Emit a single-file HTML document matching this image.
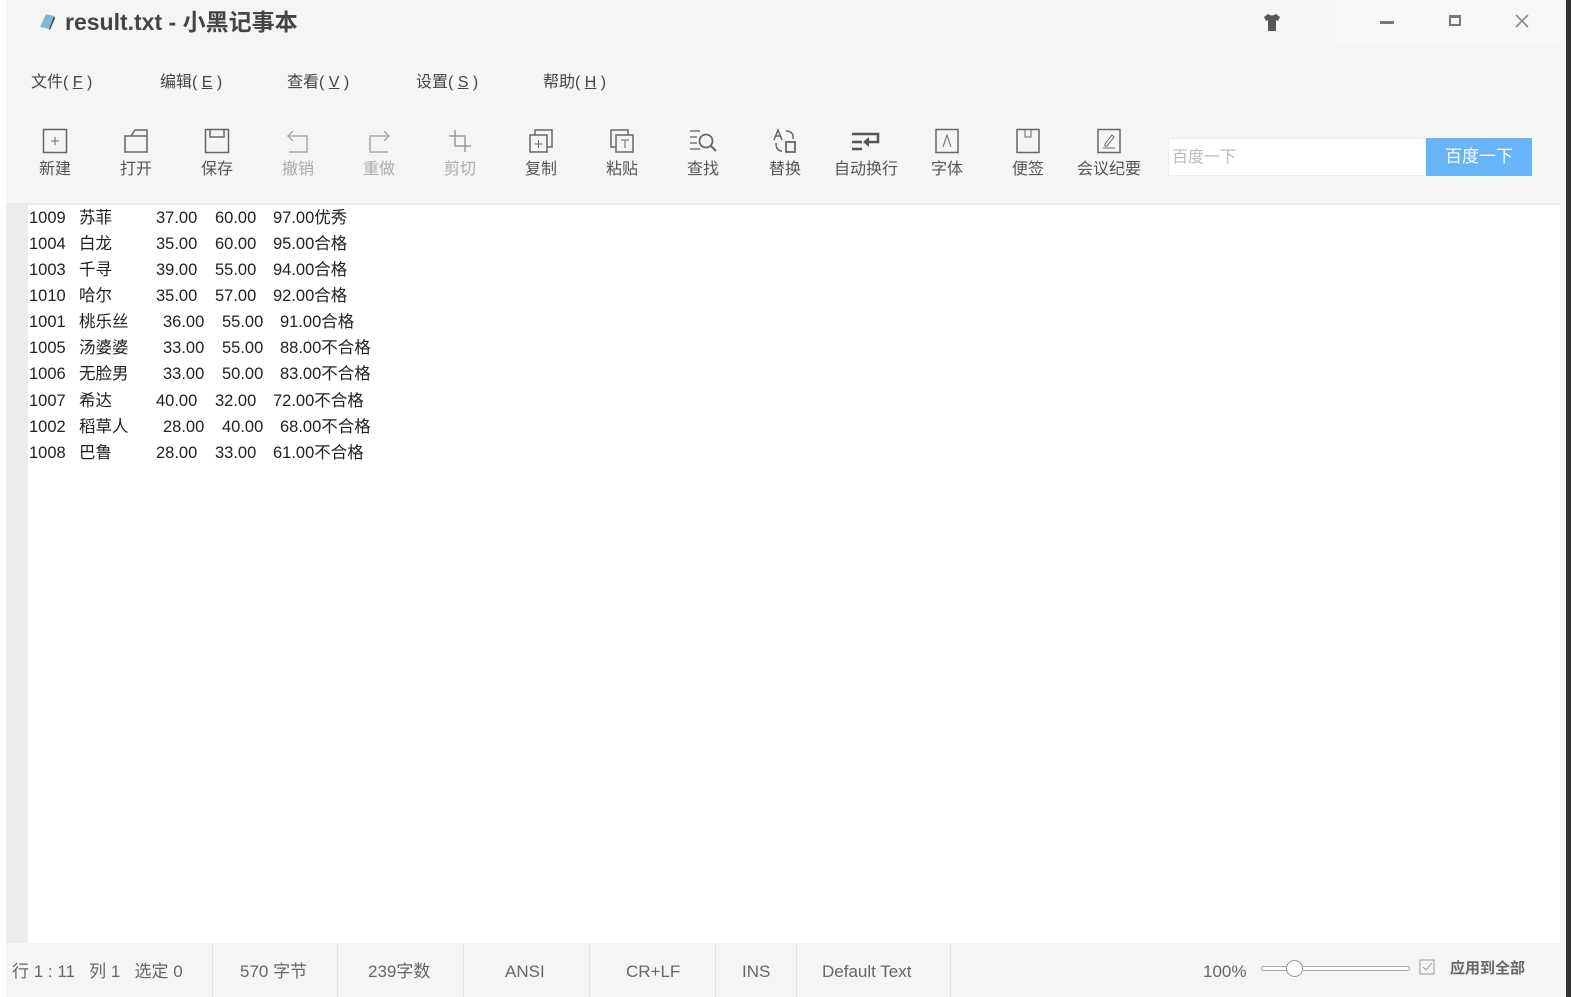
<!DOCTYPE html>
<html><head><meta charset="utf-8"><style>
*{margin:0;padding:0;box-sizing:border-box}
body{width:1571px;height:997px;overflow:hidden;background:#fff;font-family:"Liberation Sans","Noto Sans CJK SC",sans-serif;position:relative}
.win{position:absolute;left:6px;top:0;width:1560px;height:997px;background:#f5f5f5}
.abs{position:absolute;white-space:nowrap}
.menu{font-size:16px;color:#444;top:72px;line-height:22px}
.tb{position:absolute;top:128px;width:70px;text-align:center}
.tb svg{display:block;margin:0 auto}
.tb span{display:block;font-size:16px;color:#555;margin-top:5px;line-height:22px}
.tb.dis span{color:#aaa}
.ed{position:absolute;left:28px;top:205px;width:1532px;height:738px;background:#fff}
.gut{position:absolute;left:6px;top:205px;width:22px;height:738px;background:#ececec}
.ln{position:absolute;font-size:16.5px;color:#222;white-space:nowrap;line-height:22px;height:22px}
.st{position:absolute;top:961px;font-size:17px;color:#666;white-space:nowrap;line-height:22px;height:22px}
.sep{position:absolute;top:944px;width:1px;height:53px;background:#e2e2e2}
</style></head><body>
<div style="position:absolute;left:1566px;top:0;width:5px;height:997px;background:#333"></div>
<div class="win">
<div class="abs" style="left:1324px;top:0;width:236px;height:45px;background:#f7f7f7"></div>
<svg class="abs" style="left:30px;top:11px" width="22" height="20"><path d="M4 16 L10 3 L18 5 L13 18 Z" fill="#7fb8d8"/><path d="M13 18 L18 5 L19 7 L14 19Z" fill="#444"/></svg>
<div class="abs" style="left:59px;top:8px;font-size:23px;line-height:28px;font-weight:bold;color:#444">result.txt - 小黑记事本</div>
<svg class="abs" style="left:1256px;top:12px" width="20" height="20"><path d="M6 2 L2 5 L4 9 L6 8 L6 19 L14 19 L14 8 L16 9 L18 5 L14 2 Q10 5 6 2Z" fill="#555"/></svg>
<div class="abs" style="left:1374px;top:21px;width:14px;height:3px;background:#777"></div>
<div class="abs" style="left:1443px;top:15px;width:12px;height:11px;border:2px solid #777;border-top-width:3px"></div>
<svg class="abs" style="left:1508px;top:13px" width="16" height="16"><path d="M2 2L14 14M14 2L2 14" stroke="#888" stroke-width="1.6"/></svg>

<div class="abs menu" style="left:25px">文件( <u>F</u> )</div>
<div class="abs menu" style="left:154px">编辑( <u>E</u> )</div>
<div class="abs menu" style="left:281px">查看( <u>V</u> )</div>
<div class="abs menu" style="left:410px">设置( <u>S</u> )</div>
<div class="abs menu" style="left:537px">帮助( <u>H</u> )</div>

<div class="tb" style="left:14px"><svg width="26" height="26"><rect x="1.5" y="1.5" width="23" height="23" fill="none" stroke="#666" stroke-width="1.5"/><path d="M13 9v8M9 13h8" stroke="#666"/></svg><span>新建</span></div>
<div class="tb" style="left:95px"><svg width="26" height="26"><path d="M2 24V8h6l4-6h12v22z M2 8h22" fill="none" stroke="#666" stroke-width="1.5"/></svg><span>打开</span></div>
<div class="tb" style="left:176px"><svg width="26" height="26"><rect x="1.5" y="1.5" width="23" height="23" fill="none" stroke="#666" stroke-width="1.5"/><path d="M6 2v7h14V2" fill="none" stroke="#666" stroke-width="1.5"/></svg><span>保存</span></div>
<div class="tb dis" style="left:257px"><svg width="26" height="26"><path d="M8 3L3 8l5 5M3 8h19v16H4" fill="none" stroke="#aaa" stroke-width="1.5"/></svg><span>撤销</span></div>
<div class="tb dis" style="left:338px"><svg width="26" height="26"><path d="M18 3l5 5-5 5M23 8H4v16h18" fill="none" stroke="#aaa" stroke-width="1.5"/></svg><span>重做</span></div>
<div class="tb dis" style="left:419px"><svg width="26" height="26"><path d="M8 2v16h16M2 8h16v16" fill="none" stroke="#999" stroke-width="1.5"/></svg><span>剪切</span></div>
<div class="tb" style="left:500px"><svg width="26" height="26"><rect x="7" y="2" width="17" height="17" fill="none" stroke="#666" stroke-width="1.5"/><rect x="2" y="7" width="17" height="17" fill="#f5f5f5" stroke="#666" stroke-width="1.5"/><path d="M10.5 12v8M6.5 16h8" stroke="#666"/></svg><span>复制</span></div>
<div class="tb" style="left:581px"><svg width="26" height="26"><rect x="2" y="2" width="17" height="17" fill="none" stroke="#666" stroke-width="1.5"/><rect x="7" y="7" width="17" height="17" fill="#f5f5f5" stroke="#666" stroke-width="1.5"/><path d="M12 12h8M16 12v8" stroke="#666"/></svg><span>粘贴</span></div>
<div class="tb" style="left:662px"><svg width="30" height="26"><path d="M2 3h10M2 9h7M2 15h7M2 21h10" stroke="#777" stroke-width="1.5"/><circle cx="18" cy="13" r="6.5" fill="none" stroke="#666" stroke-width="1.8"/><path d="M22.5 17.5L28 23" stroke="#666" stroke-width="2"/></svg><span>查找</span></div>
<div class="tb" style="left:744px"><svg width="28" height="26"><path d="M3 12L7 2l4 10M4.5 8h5" fill="none" stroke="#666" stroke-width="1.5"/><rect x="15" y="14" width="9" height="10" fill="none" stroke="#666" stroke-width="1.8"/><path d="M15 3q8 0 7 8M5 15q0 8 6 8" fill="none" stroke="#666" stroke-width="1.5"/></svg><span>替换</span></div>
<div class="tb" style="left:825px"><svg width="32" height="26"><path d="M2 6h26v8H16M2 14h10M2 21h10" fill="none" stroke="#555" stroke-width="2.5"/><path d="M13 14l6-5v10z" fill="#555"/></svg><span>自动换行</span></div>
<div class="tb" style="left:906px"><svg width="26" height="26"><rect x="2" y="1.5" width="22" height="23" fill="none" stroke="#666" stroke-width="1.5"/><path d="M9 19l4-12 4 12" fill="none" stroke="#666"/></svg><span>字体</span></div>
<div class="tb" style="left:987px"><svg width="26" height="26"><rect x="2" y="1.5" width="22" height="23" fill="none" stroke="#666" stroke-width="1.5"/><path d="M10 2v7h6V2" fill="none" stroke="#666"/></svg><span>便签</span></div>
<div class="tb" style="left:1068px"><svg width="26" height="26"><rect x="2" y="1.5" width="22" height="23" fill="none" stroke="#666" stroke-width="1.5"/><path d="M9 16l7-9 2 2-7 9H9zM7 20h12" fill="none" stroke="#666"/></svg><span>会议纪要</span></div>

<div class="abs" style="left:1162px;top:138px;width:258px;height:38px;background:#fff;border:1px solid #eee"></div>
<div class="abs" style="left:1166px;top:148px;font-size:16px;line-height:20px;color:#bbb">百度一下</div>
<div class="abs" style="left:1420px;top:138px;width:106px;height:38px;background:#67b5f8;color:#fff;font-size:17px;text-align:center;line-height:38px">百度一下</div>
</div>
<div class="gut"></div>
<div class="ed"></div>
<div class="abs" style="left:6px;top:203px;width:1554px;height:2px;background:#ebebeb"></div>

<div class="ln" style="top:207px;left:29px">1009</div><div class="ln" style="top:207px;left:79px">苏菲</div><div class="ln" style="top:207px;left:156px">37.00</div><div class="ln" style="top:207px;left:215px">60.00</div><div class="ln" style="top:207px;left:273px">97.00优秀</div>
<div class="ln" style="top:233px;left:29px">1004</div><div class="ln" style="top:233px;left:79px">白龙</div><div class="ln" style="top:233px;left:156px">35.00</div><div class="ln" style="top:233px;left:215px">60.00</div><div class="ln" style="top:233px;left:273px">95.00合格</div>
<div class="ln" style="top:259px;left:29px">1003</div><div class="ln" style="top:259px;left:79px">千寻</div><div class="ln" style="top:259px;left:156px">39.00</div><div class="ln" style="top:259px;left:215px">55.00</div><div class="ln" style="top:259px;left:273px">94.00合格</div>
<div class="ln" style="top:285px;left:29px">1010</div><div class="ln" style="top:285px;left:79px">哈尔</div><div class="ln" style="top:285px;left:156px">35.00</div><div class="ln" style="top:285px;left:215px">57.00</div><div class="ln" style="top:285px;left:273px">92.00合格</div>
<div class="ln" style="top:311px;left:29px">1001</div><div class="ln" style="top:311px;left:79px">桃乐丝</div><div class="ln" style="top:311px;left:163px">36.00</div><div class="ln" style="top:311px;left:222px">55.00</div><div class="ln" style="top:311px;left:280px">91.00合格</div>
<div class="ln" style="top:337px;left:29px">1005</div><div class="ln" style="top:337px;left:79px">汤婆婆</div><div class="ln" style="top:337px;left:163px">33.00</div><div class="ln" style="top:337px;left:222px">55.00</div><div class="ln" style="top:337px;left:280px">88.00不合格</div>
<div class="ln" style="top:363px;left:29px">1006</div><div class="ln" style="top:363px;left:79px">无脸男</div><div class="ln" style="top:363px;left:163px">33.00</div><div class="ln" style="top:363px;left:222px">50.00</div><div class="ln" style="top:363px;left:280px">83.00不合格</div>
<div class="ln" style="top:390px;left:29px">1007</div><div class="ln" style="top:390px;left:79px">希达</div><div class="ln" style="top:390px;left:156px">40.00</div><div class="ln" style="top:390px;left:215px">32.00</div><div class="ln" style="top:390px;left:273px">72.00不合格</div>
<div class="ln" style="top:416px;left:29px">1002</div><div class="ln" style="top:416px;left:79px">稻草人</div><div class="ln" style="top:416px;left:163px">28.00</div><div class="ln" style="top:416px;left:222px">40.00</div><div class="ln" style="top:416px;left:280px">68.00不合格</div>
<div class="ln" style="top:442px;left:29px">1008</div><div class="ln" style="top:442px;left:79px">巴鲁</div><div class="ln" style="top:442px;left:156px">28.00</div><div class="ln" style="top:442px;left:215px">33.00</div><div class="ln" style="top:442px;left:273px">61.00不合格</div>

<div class="sep" style="left:212px"></div><div class="sep" style="left:337px"></div><div class="sep" style="left:463px"></div><div class="sep" style="left:589px"></div><div class="sep" style="left:715px"></div><div class="sep" style="left:796px"></div><div class="sep" style="left:950px"></div>
<div class="st" style="left:12px">行 1 : 11 &nbsp; 列 1 &nbsp; 选定 0</div>
<div class="st" style="left:240px">570 字节</div>
<div class="st" style="left:368px">239字数</div>
<div class="st" style="left:505px">ANSI</div>
<div class="st" style="left:626px">CR+LF</div>
<div class="st" style="left:742px">INS</div>
<div class="st" style="left:822px">Default Text</div>
<div class="st" style="left:1203px">100%</div>
<div class="abs" style="left:1261px;top:966px;width:149px;height:5px;border:1px solid #aaa;border-radius:3px;background:#fff"></div>
<div class="abs" style="left:1286px;top:960px;width:17px;height:17px;border:1px solid #999;border-radius:50%;background:#fff"></div>
<svg class="abs" style="left:1419px;top:959px" width="16" height="16"><rect x="1" y="1" width="14" height="14" fill="none" stroke="#999"/><path d="M4 8l3 3 6-7" fill="none" stroke="#999"/></svg>
<div class="abs" style="left:1450px;top:958px;font-size:15px;line-height:22px;font-weight:bold;color:#666">应用到全部</div>
</body></html>
